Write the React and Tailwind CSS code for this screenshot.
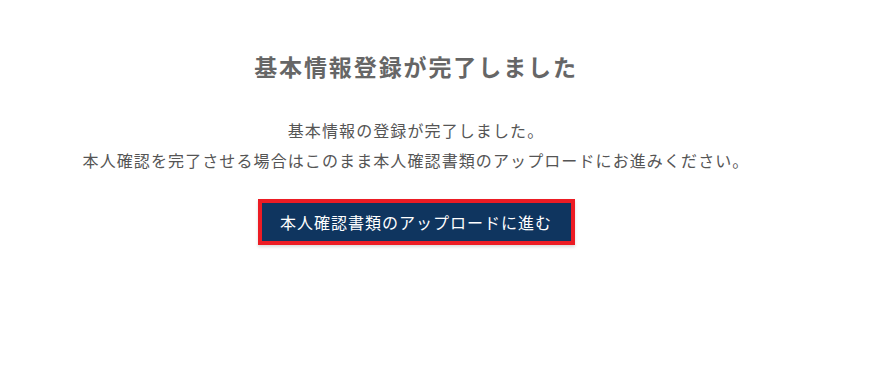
import React from 'react';

const App = () => {
  return (
    <div
      className="min-h-[368px] bg-white pr-[37px] pt-[50px]"
      style={{ fontFamily: '"Noto Sans CJK JP", "Noto Sans", sans-serif' }}
    >
      <div className="flex flex-col items-center">
        <h1 className="text-[23px] leading-[32px] font-bold text-[#666666] tracking-[1.9px]">
          基本情報登録が完了しました
        </h1>

        <div className="mt-[33px] text-center text-[16px] leading-[30px] tracking-[1.1px] text-[#555555]">
          <p>基本情報の登録が完了しました。</p>
          <p>本人確認を完了させる場合はこのまま本人確認書類のアップロードにお進みください。</p>
        </div>

        <div className="mt-[24px] border-4 border-[#ec1c24] shadow-[0_2px_3px_rgba(0,0,0,0.15)]">
          <button className="flex h-[38px] w-[309px] items-center justify-center bg-[#0f355f] text-[16px] tracking-[1px] text-white">
            本人確認書類のアップロードに進む
          </button>
        </div>
      </div>
    </div>
  );
};

export default App;
